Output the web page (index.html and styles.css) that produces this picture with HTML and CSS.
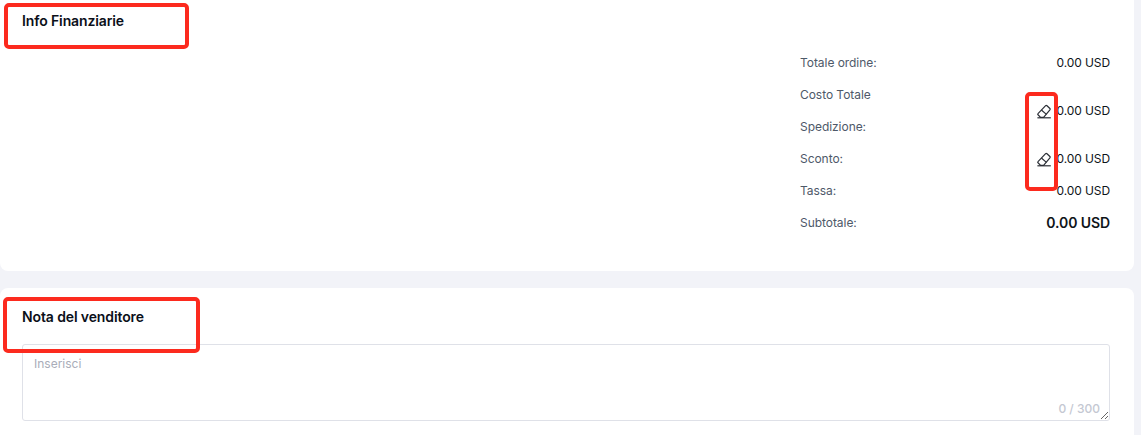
FILE: index.html
```html
<!DOCTYPE html>
<html lang="en">
<head>
    <meta charset="UTF-8">
    <title>Info Finanziarie</title>
    <link rel="stylesheet" href="styles.css">
</head>
<body>
<div class="page">
    <div class="card card_info">
        <div class="card_title">Info Finanziarie</div>
        <div class="summary">
            <div class="summary_label">Totale ordine:</div>
            <div class="summary_value">0.00 USD</div>

            <div class="summary_label">Costo Totale Spedizione:</div>
            <div class="summary_value">
                <svg class="edit_icon" viewBox="0 0 16 16">
                    <path d="M1 10.6 8.6 2.7a1 1 0 0 1 1.4 0l2.9 2.8a1 1 0 0 1 0 1.4L6.6 14.4H3.6L1 11.8a.8.8 0 0 1 0-1.2Z"/>
                    <path d="M4.4 7 9.4 11.4"/>
                    <path d="M.4 14.8H13.8"/>
                </svg>
                0.00 USD
            </div>

            <div class="summary_label">Sconto:</div>
            <div class="summary_value">
                <svg class="edit_icon" viewBox="0 0 16 16">
                    <path d="M1 10.6 8.6 2.7a1 1 0 0 1 1.4 0l2.9 2.8a1 1 0 0 1 0 1.4L6.6 14.4H3.6L1 11.8a.8.8 0 0 1 0-1.2Z"/>
                    <path d="M4.4 7 9.4 11.4"/>
                    <path d="M.4 14.8H13.8"/>
                </svg>
                0.00 USD
            </div>

            <div class="summary_label">Tassa:</div>
            <div class="summary_value">0.00 USD</div>

            <div class="summary_label">Subtotale:</div>
            <div class="summary_value summary_total">0.00 USD</div>
        </div>
    </div>

    <div class="card card_note">
        <div class="card_title">Nota del venditore</div>
        <div class="note_box">
            <textarea class="note_input" placeholder="Inserisci"></textarea>
            <span class="note_count">0 / 300</span>
        </div>
    </div>
</div>

<div class="mark mark_1"></div>
<div class="mark mark_2"></div>
<div class="mark mark_3"></div>
</body>
</html>
```

FILE: styles.css
```css
html, body {
    height: 100%;
}

body {
    margin: 0;
    overflow: hidden;
    background-color: #f2f3f8;
    font-family: Inter, "Liberation Sans", sans-serif;
    color: #1d2129;
}

.page {
    display: flex;
    flex-direction: column;
    gap: 17px;
    width: 1134px;
}

.card {
    box-sizing: border-box;
    background-color: #ffffff;
    padding: 0 24px 0 22px;
}

.card_info {
    height: 271px;
    padding-top: 11px;
    border-radius: 0 0 8px 8px;
}

.card_note {
    height: 147px;
    padding-top: 19px;
    border-radius: 8px 8px 0 0;
}

.card_title {
    font-size: 14px;
    line-height: 20px;
    font-weight: 600;
    letter-spacing: -0.12px;
    color: #0b0f19;
}

.summary {
    display: grid;
    grid-template-columns: 90px 1fr;
    width: 310px;
    margin: 16px 0 0 auto;
    font-size: 12px;
    line-height: 32px;
}

.summary_label {
    color: #4e5969;
    letter-spacing: -0.05px;
}

.summary_value {
    display: flex;
    align-items: center;
    justify-content: flex-end;
    gap: 4px;
    font-weight: 400;
    letter-spacing: -0.1px;
    color: #0f1419;
}

.summary_total {
    font-size: 14px;
    font-weight: 600;
}

.edit_icon {
    width: 16px;
    height: 16px;
    fill: none;
    stroke: #2b2f36;
    stroke-width: 1.2;
}

.note_box {
    position: relative;
    margin-top: 17px;
}

.note_input {
    display: block;
    box-sizing: border-box;
    width: 100%;
    height: 77px;
    padding: 11px;
    border: 1px solid #dfe1e8;
    border-radius: 3px;
    outline: none;
    font-family: inherit;
    font-size: 12px;
    line-height: 16px;
}

.note_input::placeholder {
    color: #a9adb9;
}

.note_count {
    position: absolute;
    right: 10px;
    bottom: 4px;
    font-size: 12px;
    font-weight: 500;
    line-height: 16px;
    color: #c4c8d2;
}

.mark {
    position: absolute;
    box-sizing: border-box;
    border: 4px solid #fc2a1e;
    border-radius: 5px;
}

.mark_1 {
    left: 4px;
    top: 3px;
    width: 185px;
    height: 46px;
}

.mark_2 {
    left: 3px;
    top: 297px;
    width: 197px;
    height: 56px;
}

.mark_3 {
    left: 1025px;
    top: 92px;
    width: 33px;
    height: 99px;
}
```
